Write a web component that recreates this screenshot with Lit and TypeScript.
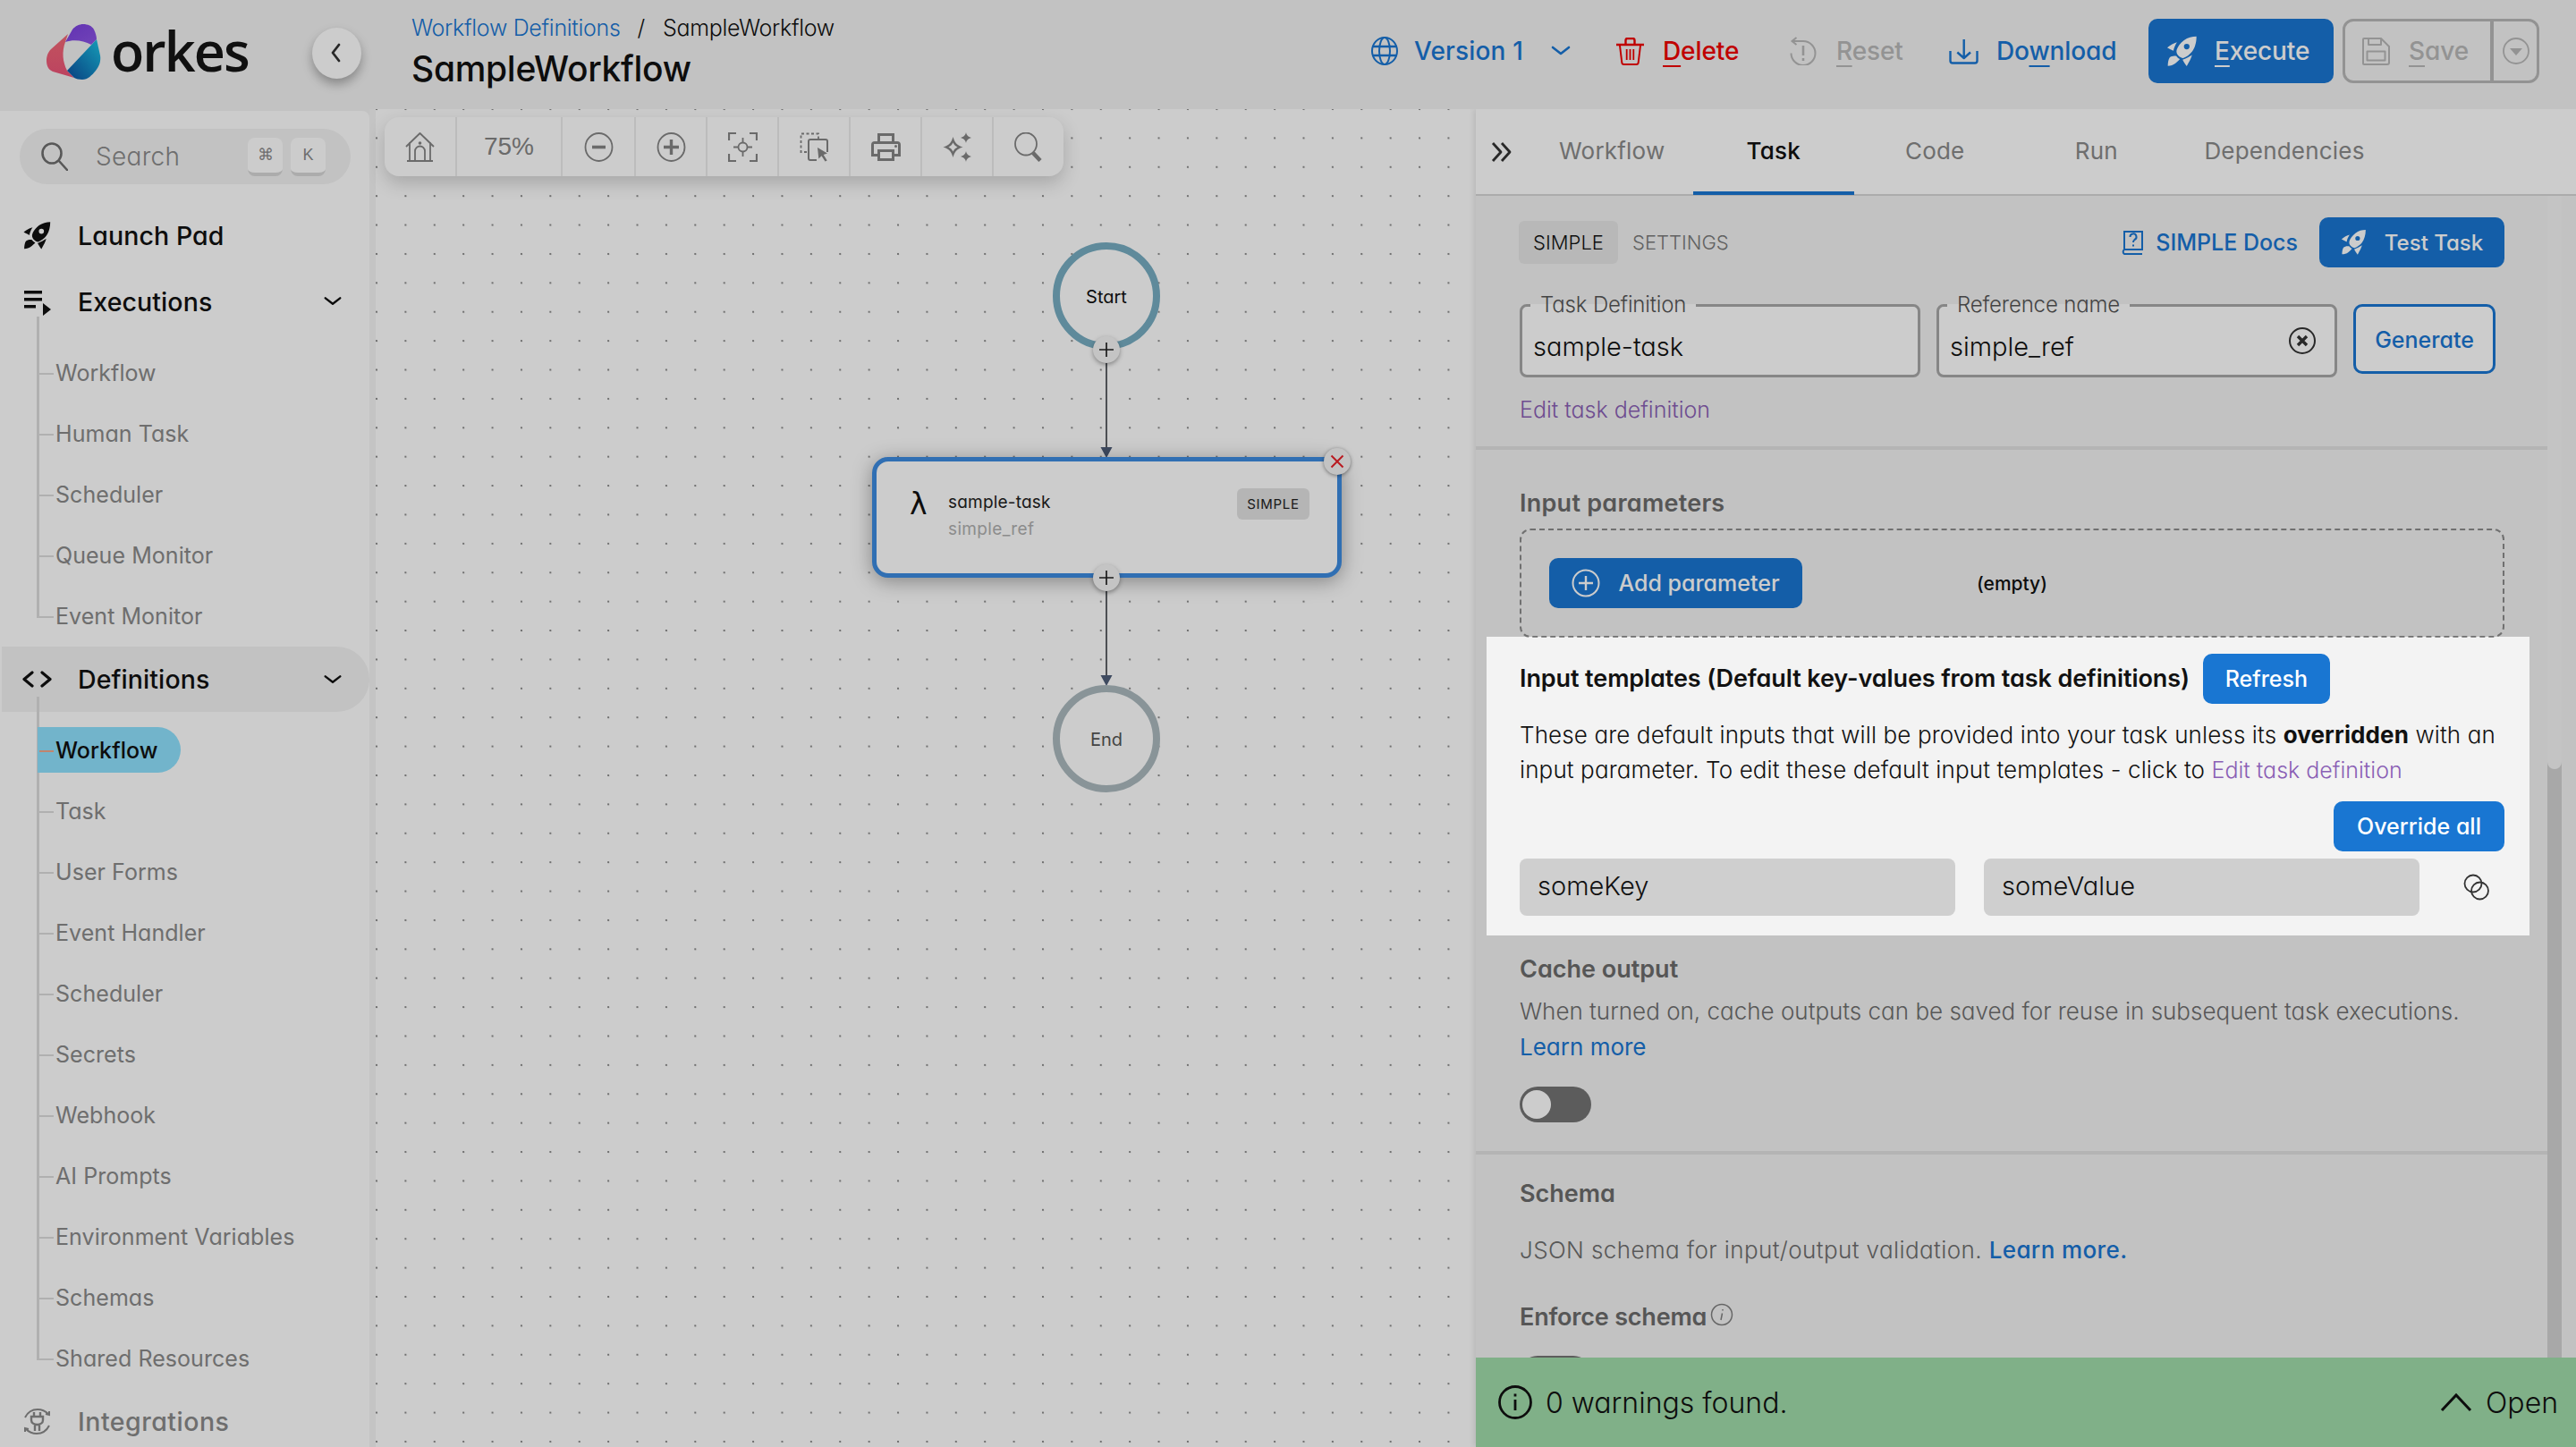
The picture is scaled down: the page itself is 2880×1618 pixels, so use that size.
import { LitElement, html, css } from "lit";
import { customElement } from "lit/decorators.js";

const rocket = (cls = "ic") => html`<svg class=${cls} viewBox="36 42 106 110" fill="currentColor"><path fill-rule="evenodd" d="M138 46c-14 0-30 4-42 13-13 10-22 22-25 33-2 8 1 14 5 19 5 5 11 9 17 9 11-4 22-12 30-22 9-12 15-30 15-52ZM105 71a9.500 9.500 0 1 1 0 19 9.500 9.500 0 0 1 0-19Z"/><path d="M72 66c-11 3-22 9-33 18 7 4 15 8 21 11 2-10 6-20 12-29ZM123 109c-3 11-9 22-18 38-4-6-10-14-14-22 11-4 22-10 32-16ZM70 113c-8-2-18 0-23 5-4 6-6 17-6 28 9 0 19-3 25-8 6-4 12-10 16-15-5-2-9-6-12-10Z"/></svg>`;
const chevDown = html`<svg class="chev" viewBox="0 0 24 24" fill="none" stroke="currentColor" stroke-width="2.600" stroke-linecap="round" stroke-linejoin="round"><path d="m3 8 9 7 9-7"/></svg>`;
const plusBtn = html`<svg viewBox="0 0 30 30" class="plus-svg" fill="none" stroke="#222" stroke-width="1.700"><path d="M15 7v16M7 15h16"/></svg>`;

const tbIcons = [
  html`<svg viewBox="0 0 33 33" fill="none" stroke="currentColor" stroke-width="1.800" stroke-linejoin="round"><path d="M1 16 16.500 1 32 16M5 11v20M28 11v20M2 32h29"/><path d="M11 32V21a5.500 5.500 0 0 1 11 0v11"/><circle cx="16.500" cy="12" r="1.800" fill="currentColor" stroke="none"/></svg>`,
  html`<svg viewBox="0 0 33 33" fill="none" stroke="currentColor" stroke-width="1.800"><ellipse cx="16.500" cy="16.500" rx="15" ry="15.500"/><path stroke-width="3.600" d="M9 16.500h15"/></svg>`,
  html`<svg viewBox="0 0 33 33" fill="none" stroke="currentColor" stroke-width="1.800"><ellipse cx="16.500" cy="16.500" rx="15" ry="15.500"/><path stroke-width="3.400" d="M8 16.500h17M16.500 8v17"/></svg>`,
  html`<svg viewBox="0 0 33 33" fill="none" stroke="currentColor" stroke-width="1.800"><path stroke-width="2.200" d="M9 1H1v8M24 1h8v8M9 32H1v-8M24 32h8v-8"/><circle cx="16.500" cy="16.500" r="5"/><path d="M16.500 6v5M16.500 22v5M6 16.500h5M22 16.500h5"/></svg>`,
  html`<svg viewBox="0 0 33 33" fill="none" stroke="currentColor" stroke-width="1.800"><path stroke-dasharray="3 2.500" d="M8 22H1.500V1.500H21v6"/><path stroke-width="2" d="M19 31h-7a2 2 0 0 1-2-2V10a2 2 0 0 1 2-2h17a2 2 0 0 1 2 2v12"/><path fill="currentColor" stroke="none" d="m20 17 11 6.500-4.300 1.600 4 6.500-2.200 1-4-6.300-3.200 3.200Z"/></svg>`,
  html`<svg viewBox="0 0 33 33" fill="currentColor"><path fill-rule="evenodd" d="M7 1h19v9h3a4 4 0 0 1 4 4v13h-7v5H7v-5H0V14a4 4 0 0 1 4-4h3ZM10 4v6h13V4ZM3 13v11h4v-5h19v5h4V13ZM10 22v7h13v-7Z"/><circle cx="27.500" cy="15.500" r="1.500"/></svg>`,
  html`<svg viewBox="0 0 33 33" fill="currentColor"><path fill-rule="evenodd" d="M11.500 5c1.800 6.500 4.500 9.400 11 11.500-6.500 2-9.200 5-11 11.500C9.700 21.500 7 18.500.5 16.500 7 14.400 9.700 11.500 11.500 5Zm0 6.500c-1 2.300-2.700 4-5 5 2.300 1 4 2.700 5 5 1-2.300 2.700-4 5-5-2.300-1-4-2.700-5-5Z"/><path d="M26 0c.8 3.400 2.200 4.900 6 6-3.800 1.100-5.200 2.600-6 6-.8-3.400-2.200-4.900-6-6 3.800-1.100 5.200-2.600 6-6ZM26 21c.8 3.400 2.200 4.900 6 6-3.800 1.100-5.200 2.600-6 6-.8-3.400-2.200-4.900-6-6 3.800-1.100 5.200-2.600 6-6Z"/></svg>`,
  html`<svg viewBox="0 0 33 33" fill="none" stroke="currentColor" stroke-width="1.800"><ellipse cx="13" cy="13" rx="12" ry="12.500"/><path stroke-width="4.500" d="m21 23 8 8.500"/></svg>`,
];

const sidebarExec = ["Workflow", "Human Task", "Scheduler", "Queue Monitor", "Event Monitor"];
const sidebarDefs = ["Workflow", "Task", "User Forms", "Event Handler", "Scheduler", "Secrets", "Webhook", "AI Prompts", "Environment Variables", "Schemas", "Shared Resources"];

@customElement("app-root")
export class AppRoot extends LitElement {
  static styles = css`
    :host { display: block; width: 2880px; height: 1618px; position: relative; overflow: hidden; background: #f3f3f3; color: #111;
      font-family: Inter, "Noto Sans", sans-serif; font-feature-settings: "cv11" 1; }
    svg { display: block; flex: none; }
    .header { height: 122px; display: flex; align-items: stretch; background: #f3f3f3; position: relative; z-index: 1; }
    .brand { width: 460px; flex: none; display: flex; align-items: center; padding-left: 52px; box-sizing: border-box; }
    .logo { width: 61px; height: 62px; margin-top: -6px; }
    .orkes { font-family: "Open Sans", sans-serif; font-weight: 600; font-size: 61px; letter-spacing: -1.900px; line-height: 1; color: #151515; margin-left: 11px; margin-top: -10px; font-feature-settings: normal; }
    .collapse { width: 55px; height: 57px; border-radius: 50%; background: #ffffff; box-shadow: 0 6px 12px rgba(0,0,0,.3); margin-left: 71px; margin-top: -4px; display: flex; align-items: center; justify-content: center; color: #333; }
    .collapse svg { width: 20px; height: 24px; }
    .titles { padding-top: 14px; }
    .crumb { display: flex; align-items: center; font-size: 25px; height: 34px; white-space: nowrap; letter-spacing: -.300px; }
    .crumb a { color: #1976d2; font-weight: 300; }
    .crumb i { font-style: normal; margin: 0 20px 0 19px; font-weight: 300; }
    .crumb span { font-weight: 300; }
    .title { font-size: 39px; font-weight: 500; line-height: 50px; margin-top: 4px; letter-spacing: -.300px; white-space: nowrap; }
    .actions { margin-left: auto; margin-right: 41px; display: flex; align-items: center; height: 72px; margin-top: 21px; font-size: 28px; font-weight: 500; white-space: nowrap; letter-spacing: -.1px; }
    .act { display: flex; align-items: center; height: 72px; box-sizing: border-box; flex: none; }
    .act u { text-decoration-thickness: 2px; text-underline-offset: 6px; }
    .blue { color: #1976d2; } .red { color: #f00000; } .gray { color: #b8b8b8; }
    .version { width: 242px; padding-left: 8px; gap: 18px; letter-spacing: .15px; }
    .version .globe { width: 30px; height: 32px; }
    .version .chev { width: 24px; height: 24px; margin-left: 12px; }
    .del { width: 208px; padding-left: 40px; gap: 21px; }
    .del svg { width: 31px; height: 31px; }
    .reset { width: 180px; padding-left: 26px; gap: 22px; }
    .reset svg { width: 30px; height: 32px; }
    .down { width: 214px; padding-left: 24px; gap: 20px; }
    .down svg { width: 33px; height: 29px; }
    .exec { width: 207px; margin-left: 33px; border-radius: 10px; background: #1976d2; color: #fff; padding-left: 20px; gap: 19px; }
    .exec .ic { width: 35px; height: 37px; }
    .save { width: 220px; margin-left: 10px; border: 3px solid #b8b8b8; border-radius: 12px; padding-left: 19px; box-sizing: border-box; }
    .save .floppy { width: 31px; height: 31px; margin-right: 21px; }
    .save .sep { width: 4px; height: 66px; flex: none; background: #b8b8b8; margin-left: auto; margin-right: 10px; }
    .save .circ { width: 30px; height: 30px; margin-right: 8px; }

    .main { height: 1496px; display: flex; }
    .sidebar { width: 413px; flex: none; height: 1496px; margin-top: 2px; background: #fff; border-top-right-radius: 8px; overflow: hidden; padding-top: 20px; box-sizing: border-box; }
    .handle { width: 7px; flex: none; background: #f5f5f5; }
    .search { height: 62px; margin: 0 21px 23px 22px; background: #f3f3f3; border-radius: 31px; display: flex; align-items: center; padding-left: 24px; color: #8a8a8a; font-size: 28px; font-weight: 300; position: relative; }
    .search svg { width: 30px; height: 32px; color: #6f6f6f; }
    .search .txt { margin-left: 31px; letter-spacing: .3px; }
    .key { width: 39px; height: 43px; box-sizing: border-box; border-radius: 8px; background: #fff; border-bottom: 4px solid #d8d8d8; display: flex; align-items: center; justify-content: center; font-size: 18px; color: #8a8a8a; font-family: "Liberation Sans", sans-serif; }
    .key.k1 { margin-left: auto; } .key.k2 { margin: 0 28px 0 9px; }
    .row { display: flex; align-items: center; height: 68px; padding: 0 29px 0 25px; font-size: 28.500px; font-weight: 500; white-space: nowrap; letter-spacing: .1px; position: relative; }
    .row .rico { width: 33px; height: 33px; margin-right: 29px; color: #111; }
    .row .chev { width: 22px; height: 22px; margin-left: auto; margin-right: 1px; }
    .row.lp { margin-bottom: 6px; }
    .row.def { height: 73px; background: #f3f3f3; margin-left: 2px; padding-left: 23px; border-radius: 0 37px 37px 0; width: 411px; box-sizing: border-box; }
    .row.int { height: 72px; color: #8a8a8a; letter-spacing: .5px; }
    .row.int .rico { color: #8a8a8a; }
    .tree { position: relative; margin-left: 41px; padding-top: 12px; }
    .tree.t2 { padding-top: 9px; }
    .tree::before { content: ""; position: absolute; left: 0; top: -17px; bottom: 32px; width: 3px; background: #dcdcdc; }
    .item { height: 68px; display: flex; align-items: center; font-size: 25px; color: #8a8a8a; padding-left: 21px; position: relative; white-space: nowrap; letter-spacing: .05px; }
    .item::before { content: ""; position: absolute; left: 3px; top: 50%; width: 16px; height: 2px; background: #dcdcdc; }
    .item.on { color: #111; font-weight: 500; }
    .item.on::after { content: ""; position: absolute; left: 1px; top: 8px; width: 160px; height: 51px; background: #8fe2fe; border-radius: 0 26px 26px 0; z-index: 0; }
    .item span { position: relative; z-index: 1; }
    .item.on::before { z-index: 1; background: #f2a58a; }

    .canvas { width: 1230px; flex: none; position: relative; background-color: #fff;
      background-image: radial-gradient(circle at 1.2px 1.2px, #8c8c8c 0 1.100px, transparent 1.300px);
      background-size: 32.400px 32.400px; background-position: 0 -1px; }
    .toolbar { position: absolute; left: 10px; top: 9px; height: 66px; display: flex; background: #fff; border-radius: 16px; box-shadow: 0 8px 20px rgba(0,0,0,.18); color: #858585; }
    .tb { display: flex; align-items: center; justify-content: center; border-right: 2px solid #ebebeb; width: 78px; }
    .tb:last-child { border-right: 0; }
    .tb svg { width: 33px; height: 33px; }
    .tb.home { width: 79px; }
    .tb.pct { width: 116px; font-family: "Liberation Sans", sans-serif; font-size: 28px; }
    .tb.wide { width: 80px; }
    .edges { position: absolute; left: 0; top: 0; width: 1230px; height: 800px; pointer-events: none; }
    .cnode { position: absolute; width: 120px; height: 120px; box-sizing: border-box; border-radius: 50%; border: 8px solid #77adc2; display: flex; align-items: center; justify-content: center; font-size: 20px; background: #fff; padding-top: 2px; }
    .cnode.start { left: 757px; top: 149px; }
    .cnode.end { left: 757px; top: 644px; border-color: #acbabf; color: #555; }
    .plus { position: absolute; width: 30px; height: 30px; border-radius: 50%; background: #f6f6f6; box-shadow: 0 2px 5px rgba(0,0,0,.35); }
    .p1 { left: 802px; top: 254px; } .p2 { left: 802px; top: 509px; }
    .task { position: absolute; left: 555px; top: 389px; width: 525px; height: 135px; box-sizing: border-box; border: 5px solid #3d8be0; border-radius: 18px; background: #fff; box-shadow: 0 4px 22px rgba(0,0,0,.35); }
    .lam { position: absolute; left: 37px; top: 28px; font-family: "DejaVu Sans", sans-serif; font-size: 33px; font-weight: 400; color: #111; }
    .tname { position: absolute; left: 80px; top: 32px; font-size: 19px; line-height: 28px; color: #222; letter-spacing: .2px; }
    .tref { position: absolute; left: 80px; top: 62px; font-size: 19px; line-height: 28px; color: #b0b0b0; letter-spacing: .35px; }
    .badge { position: absolute; left: 403px; top: 30px; width: 81px; height: 35px; border-radius: 6px; background: #e3e3e3; display: flex; align-items: center; justify-content: center; font-size: 15px; letter-spacing: .7px; color: #222; }
    .close { position: absolute; left: 1060px; top: 379px; width: 30px; height: 30px; border-radius: 50%; background: #f4f4f4; box-shadow: 0 1px 4px rgba(0,0,0,.45); }

    .panel { width: 1230px; flex: none; height: 1496px; background: #f3f3f3; display: flex; flex-direction: column; box-shadow: -2px 0 6px rgba(0,0,0,.1); position: relative; }
    .tabs { height: 95px; flex: none; background: #fff; border-bottom: 2px solid #d6d6d6; display: flex; box-sizing: content-box; }
    .dbl { width: 62px; display: flex; align-items: center; justify-content: center; color: #333; }
    .dbl svg { width: 28px; height: 26px; margin-left: -4px; }
    .tab { width: 180.500px; display: flex; align-items: center; justify-content: center; font-size: 26px; color: #8a8a8a; font-weight: 400; box-sizing: border-box; border-bottom: 4px solid transparent; margin-bottom: -1px; letter-spacing: .2px; }
    .tab.on { color: #111; font-weight: 500; border-bottom-color: #1976d2; }
    .tab.wide { width: 240px; }
    .body { flex: 1; display: flex; min-height: 0; }
    .scroll { width: 1198px; flex: none; padding-top: 24px; overflow: hidden; box-sizing: border-box; }
    .pad { padding: 0 48px 0 49px; }
    .track { width: 16px; flex: none; background: #d3d3d3; }
    .thumb { height: 641px; background: #f6f6f6; border-radius: 0 0 8px 8px; }
    .head { height: 56px; display: flex; align-items: center; font-size: 22px; }
    .chip { width: 111px; height: 48px; background: #e7e7e7; border-radius: 6px; display: flex; align-items: center; justify-content: center; color: #111; font-weight: 300; margin-left: -1px; }
    .sett { margin-left: 16px; font-weight: 300; color: #7a7a7a; }
    .docs { margin-left: auto; display: flex; align-items: center; gap: 13px; color: #1976d2; font-size: 25px; font-weight: 500; margin-right: 24px; }
    .docs svg { width: 26px; height: 28px; }
    .btn { background: #1976d2; color: #fff; border-radius: 10px; display: flex; align-items: center; justify-content: center; white-space: nowrap; font-weight: 500; font-size: 25px; box-sizing: border-box; flex: none; }
    .tt { width: 207px; height: 56px; gap: 20px; font-size: 24px; }
    .tt .ic { width: 29px; height: 30px; }
    .fields { display: flex; margin-top: 41px; }
    .field { width: 448px; height: 82px; box-sizing: border-box; border: 3px solid #a8a8a8; border-radius: 8px; margin-right: 18px; position: relative; background: #fff; display: flex; align-items: center; padding: 12px 12px 0; font-size: 29px; font-weight: 300; }
    .field label { position: absolute; left: 9px; top: -21px; padding: 0 11px; height: 36px; display: flex; align-items: center; background: linear-gradient(#f3f3f3 50%, #fff 50%); font-size: 24px; color: #555; white-space: nowrap; letter-spacing: -.15px; }
    .field svg { position: absolute; right: 20px; top: 22px; width: 32px; height: 32px; color: #333; }
    .gen { width: 159px; height: 78px; border: 3px solid #1976d2; background: #fff; color: #1976d2; padding-top: 2px; }
    .edit { margin-top: 18px; font-size: 25px; line-height: 36px; color: #8a5fb5; font-weight: 300; }
    .divider { height: 4px; background: #e2e2e2; }
    .d1 { margin-top: 23px; }
    .h3 { font-size: 27px; font-weight: 600; line-height: 36px; color: #6c6c6c; white-space: nowrap; }
    .ip { margin-top: 42px; letter-spacing: .25px; }
    .dash { margin-top: 10px; height: 122px; box-sizing: border-box; border: 2px dashed #8d8d8d; border-radius: 12px; display: flex; align-items: center; padding-left: 31px; font-size: 21px; margin-bottom: -1px; }
    .addp { width: 283px; height: 56px; gap: 20px; font-size: 25px; font-weight: 500; }
    .addp svg { width: 32px; height: 32px; }
    .empty { margin-left: 195px; font-weight: 500; color: #111; }
    .spot-row { margin-top: 19px; display: flex; align-items: center; height: 56px; gap: 15px; }
    .spot-row .h3 { color: #111; letter-spacing: -.1px; }
    .refresh { width: 142px; height: 56px; }
    .para { margin-top: 15px; font-size: 26px; line-height: 39px; font-weight: 300; color: #111; white-space: nowrap; letter-spacing: .12px; }
    .para b { font-weight: 700; }
    .para a { color: #8a5fb5; font-size: 25px; letter-spacing: 0; }
    .ov { margin: 15px 0 0 auto; width: 191px; height: 56px; }
    .kv { display: flex; margin-top: 8px; align-items: center; }
    .kvf { width: 487px; height: 64px; background: #cfcfcf; border-radius: 8px; display: flex; align-items: center; padding-left: 20px; box-sizing: border-box; font-size: 29px; font-weight: 300; margin-right: 32px; margin-top: 0; padding-bottom: 4px; }
    .kv svg { width: 32px; height: 32px; margin: 0 0 0 16px; }
    .co { margin-top: 42px; }
    .desc { margin-top: 9px; font-size: 26px; line-height: 40px; color: #6e6e6e; font-weight: 300; white-space: nowrap; }
    .desc a { color: #1976d2; font-weight: 400; }
    .desc a.b { font-weight: 500; }
    .toggle { width: 80px; height: 40px; border-radius: 20px; background: #747474; margin-top: 24px; position: relative; }
    .toggle::after { content: ""; position: absolute; left: 3px; top: 4px; width: 32px; height: 32px; border-radius: 50%; background: #fff; }
    .d2 { margin-top: 32px; }
    .sch { margin-top: 26px; }
    .js { margin-top: 25px; letter-spacing: .4px; }
    .enf { margin-top: 37px; display: flex; align-items: center; gap: 4px; letter-spacing: -.2px; }
    .enf svg { width: 26px; height: 26px; margin-top: -6px; color: #808080; }
    .t2g { margin-top: 25px; }
    .banner { height: 100px; flex: none; background: #a1dcab; display: flex; align-items: center; padding: 0 20px 0 24px; font-size: 32px; font-weight: 300; color: #111; }
    .banner .i { width: 40px; height: 40px; margin-right: 14px; }
    .banner .up { width: 36px; height: 22px; margin-left: auto; margin-right: 15px; }
    .spot { position: absolute; left: 1662px; top: 712px; width: 1166px; height: 334px; box-shadow: 0 0 0 4000px rgba(0,0,0,.2); pointer-events: none; z-index: 5; }
  `;

  render() {
    return html`
      <div class="header">
        <div class="brand">
          <svg class="logo" viewBox="0 0 61 62">
            <defs>
              <linearGradient id="lg1" x1="0" y1="0" x2="1" y2="1"><stop offset="0" stop-color="#7a3fe0"/><stop offset="1" stop-color="#8e56e6"/></linearGradient>
              <linearGradient id="lg2" x1="0" y1="1" x2="1" y2="0"><stop offset="0" stop-color="#0a4fa0"/><stop offset="1" stop-color="#1cc4e6"/></linearGradient>
              <linearGradient id="lg3" x1="0" y1="0" x2="0" y2="1"><stop offset="0" stop-color="#f26a76"/><stop offset="1" stop-color="#ec5478"/></linearGradient>
            </defs>
            <path fill="url(#lg3)" d="M24 11 5 28C1 32 0 37 0 41c0 5 2 10 7 12l24 7-8-8C18 42 17 31 21 20Z"/>
            <path fill="url(#lg1)" d="M21 20 29 6c3-4 8-6 12-6 5 0 10 2 12 6 2 4 3 8 3 11l-6 6c-9-5-20-6-29-3Z"/>
            <path fill="url(#lg2)" d="m56 17 4 18c1 6-1 12-5 17-4 5-9 10-15 10-4 0-7-1-9-2l-8-8Z"/>
          </svg>
          <div class="orkes">orkes</div>
          <div class="collapse"><svg viewBox="0 0 20 24" fill="none" stroke="currentColor" stroke-width="2.800" stroke-linecap="round" stroke-linejoin="round"><path d="M13 3 6 12l7 9"/></svg></div>
        </div>
        <div class="titles">
          <div class="crumb"><a>Workflow Definitions</a><i>/</i><span>SampleWorkflow</span></div>
          <div class="title">SampleWorkflow</div>
        </div>
        <div class="actions">
          <div class="act blue version">
            <svg class="globe" viewBox="0 0 30 32" fill="none" stroke="currentColor" stroke-width="2"><ellipse cx="15" cy="16" rx="14" ry="15"/><ellipse cx="15" cy="16" rx="6" ry="15"/><path stroke-width="2.600" d="M2 11h26M2 21h26"/></svg>
            <span>Version 1</span>${chevDown}
          </div>
          <div class="act red del"><svg viewBox="0 0 31 31" fill="none" stroke="currentColor" stroke-width="2"><path stroke-width="2.400" d="M0 8h31M10.500 7V3q0-2 2-2h6q2 0 2 2v4"/><path d="m4 9 2.300 19q.2 2 2.200 2h14q2 0 2.200-2L27 9"/><path stroke-width="1.800" d="M11.700 13v12M15.500 13v12M19.300 13v12"/></svg><span><u>D</u>elete</span></div>
          <div class="act gray reset"><svg viewBox="0 0 30 32" fill="none" stroke="currentColor" stroke-width="2"><path d="M3 5h12a13.500 13.500 0 1 1-13.500 13.500"/><path d="M7.500 1 2.500 5l5 4"/><path stroke-width="2.600" d="M15 10v11M15 24v3"/></svg><span><u>R</u>eset</span></div>
          <div class="act blue down"><svg viewBox="0 0 33 29" fill="none" stroke="currentColor" stroke-width="2.400" stroke-linejoin="round"><path d="M16.700 1v21M9.300 15.500l7.400 6.500 7.300-6.500M1.500 14v11q0 2.500 2.500 2.500h25q2.500 0 2.500-2.500V14"/></svg><span>Do<u>w</u>nload</span></div>
          <div class="act exec">${rocket()}<span><u>E</u>xecute</span></div>
          <div class="act gray save"><svg class="floppy" viewBox="0 0 31 31" fill="none" stroke="currentColor" stroke-width="2" stroke-linejoin="round"><path d="M2 1h19l9 9v18a2 2 0 0 1-2 2H2a1 1 0 0 1-1-1V2a1 1 0 0 1 1-1Z"/><path d="M7 1v7h14V1M5.500 15.500h20v10h-20Z"/></svg><span><u>S</u>ave</span><i class="sep"></i><svg class="circ" viewBox="0 0 30 30" fill="none" stroke="currentColor" stroke-width="1.800"><circle cx="15" cy="15" r="14"/><path fill="currentColor" stroke="none" d="M8 12h14l-7 8Z"/></svg></div>
        </div>
      </div>
      <div class="main">
        <div class="sidebar">
          <div class="search">
            <svg viewBox="0 0 30 32" fill="none" stroke="currentColor" stroke-width="2.600" stroke-linecap="round"><ellipse cx="12" cy="12.500" rx="10.500" ry="11"/><path d="m20 21 9 10"/></svg>
            <span class="txt">Search</span>
            <span class="key k1">⌘</span><span class="key k2">K</span>
          </div>
          <div class="row lp">${rocket("rico")}Launch Pad</div>
          <div class="row">
            <svg class="rico" viewBox="0 0 33 33" fill="#111"><rect x="2" y="4" width="20" height="3.500"/><rect x="2" y="12" width="20" height="3.500"/><rect x="2" y="20" width="13" height="3.500"/><path d="M23 18v14l9-7Z"/></svg>
            Executions${chevDown}
          </div>
          <div class="tree">${sidebarExec.map((i) => html`<div class="item"><span>${i}</span></div>`)}</div>
          <div class="row def">
            <svg class="rico" viewBox="0 0 33 33" fill="none" stroke="#111" stroke-width="3.200" stroke-linecap="round" stroke-linejoin="round"><path d="M11 9 2 16.500l9 7.500M22 9l9 7.500-9 7.500"/></svg>
            Definitions${chevDown}
          </div>
          <div class="tree t2">${sidebarDefs.map((i, n) => html`<div class="item ${n === 0 ? "on" : ""}"><span>${i}</span></div>`)}</div>
          <div class="row int">
            <svg class="rico" viewBox="0 0 33 33" fill="none" stroke="currentColor" stroke-width="2"><path d="M3 12C6 6 11 3 17 3c5 0 9 2 12 5M30 21c-3 6-8 9-14 9-5 0-9-2-12-5"/><path d="m26 8 4 1 0-4M7 25l-4-1 0 4"/><path stroke-width="2.400" d="M10 11h13v4c0 3-3 5-6.500 5S10 18 10 15ZM13 6v5M20 6v5M14 20v7M19 20v7"/></svg>
            Integrations
          </div>
        </div>
        <div class="handle"></div>
        <div class="canvas">
          <svg class="edges" viewBox="0 0 1230 800" fill="none">
            <path d="M817 260v125M817 520v120" stroke="#5f6368" stroke-width="2"/>
            <path d="M810.500 378h13L817 390ZM810.500 633h13L817 645Z" fill="#4e5d78"/>
          </svg>
          <div class="cnode start">Start</div>
          <div class="cnode end">End</div>
          <div class="task">
            <div class="lam">λ</div>
            <div class="tname">sample-task</div>
            <div class="tref">simple_ref</div>
            <div class="badge">SIMPLE</div>
          </div>
          <div class="plus p1">${plusBtn}</div>
          <div class="plus p2">${plusBtn}</div>
          <div class="close"><svg viewBox="0 0 30 30" fill="none" stroke="#e8222a" stroke-width="2"><path d="m8.500 8.500 13 13M21.500 8.500l-13 13"/></svg></div>
          <div class="toolbar">
            <div class="tb home">${tbIcons[0]}</div>
            <div class="tb pct">75%</div>
            ${tbIcons.slice(1).map((i, n) => html`<div class="tb ${n === 0 ? "wide" : ""}">${i}</div>`)}
          </div>
        </div>
        <div class="panel">
          <div class="tabs">
            <div class="dbl"><svg viewBox="0 0 28 26" fill="none" stroke="currentColor" stroke-width="2.800" stroke-linejoin="round"><path d="m4 3 9 10-9 10M14 3l9 10-9 10"/></svg></div>
            <div class="tab">Workflow</div>
            <div class="tab on">Task</div>
            <div class="tab">Code</div>
            <div class="tab">Run</div>
            <div class="tab wide">Dependencies</div>
          </div>
          <div class="body">
            <div class="scroll">
              <div class="pad">
                <div class="head">
                  <div class="chip">SIMPLE</div><div class="sett">SETTINGS</div>
                  <div class="docs"><svg viewBox="0 0 26 28" fill="none" stroke="currentColor" stroke-width="2"><path d="M4 22V2h20v20H4a3 3 0 0 0 0 5h20"/><path d="M10.500 8a3.500 3.500 0 1 1 5 3c-1 .7-1.500 1.300-1.500 3M14 16.500v2"/></svg>SIMPLE Docs</div>
                  <div class="btn tt">${rocket()}Test Task</div>
                </div>
                <div class="fields">
                  <div class="field"><label>Task Definition</label>sample-task</div>
                  <div class="field"><label>Reference name</label>simple_ref<svg viewBox="0 0 32 32" fill="none" stroke="currentColor" stroke-width="2"><circle cx="16" cy="16" r="14"/><path stroke-width="3.400" d="m11 11 10 10M21 11 11 21"/></svg></div>
                  <div class="btn gen">Generate</div>
                </div>
                <div class="edit">Edit task definition</div>
              </div>
              <div class="divider d1"></div>
              <div class="pad">
                <div class="h3 ip">Input parameters</div>
                <div class="dash">
                  <div class="btn addp"><svg viewBox="0 0 32 32" fill="none" stroke="currentColor" stroke-width="2"><circle cx="16" cy="16" r="14.500"/><path stroke-width="2.400" d="M16 8v16M8 16h16"/></svg>Add parameter</div>
                  <div class="empty">(empty)</div>
                </div>
                <div class="spot-row"><div class="h3">Input templates (Default key-values from task definitions)</div><div class="btn refresh">Refresh</div></div>
                <div class="para">These are default inputs that will be provided into your task unless its <b>overridden</b> with an<br/>input parameter. To edit these default input templates - click to <a>Edit task definition</a></div>
                <div class="btn ov">Override all</div>
                <div class="kv">
                  <div class="kvf">someKey</div><div class="kvf">someValue</div>
                  <svg viewBox="0 0 32 32" fill="none" stroke="#333" stroke-width="1.800"><circle cx="12" cy="12" r="9.500"/><circle cx="19.500" cy="20" r="9.500"/></svg>
                </div>
                <div class="h3 co">Cache output</div>
                <div class="desc">When turned on, cache outputs can be saved for reuse in subsequent task executions.<br/><a>Learn more</a></div>
                <div class="toggle"></div>
              </div>
              <div class="divider d2"></div>
              <div class="pad">
                <div class="h3 sch">Schema</div>
                <div class="desc js">JSON schema for input/output validation. <a class="b">Learn more.</a></div>
                <div class="h3 enf">Enforce schema<svg viewBox="0 0 26 26" fill="none" stroke="currentColor" stroke-width="1.500"><circle cx="13" cy="13" r="11.500"/><path d="M13.500 11.500 12 19M14 7v1.500"/></svg></div>
                <div class="toggle t2g"></div>
              </div>
            </div>
            <div class="track"><div class="thumb"></div></div>
          </div>
          <div class="banner">
            <svg class="i" viewBox="0 0 40 40" fill="none" stroke="#111" stroke-width="2.800"><circle cx="20" cy="20" r="17.500"/><path d="M20 17v12M20 10.500v3"/></svg>
            0 warnings found.
            <svg class="up" viewBox="0 0 36 22" fill="none" stroke="#111" stroke-width="3"><path d="M2 20 18 3l16 17"/></svg>
            Open
          </div>
        </div>
      </div>
      <div class="spot"></div>
    `;
  }
}
